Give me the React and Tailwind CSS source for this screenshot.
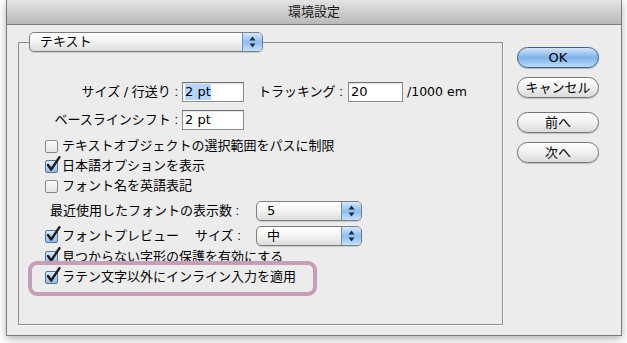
import React from "react";

const FONT = { fontFamily: '"Liberation Sans", "Noto Sans CJK JP", sans-serif' };
const LATIN = { fontFamily: '"DejaVu Sans", "Noto Sans CJK JP", sans-serif' };

function Arrows() {
  return (
    <svg width="7" height="12" viewBox="0 0 7 12">
      <path d="M3.5 0.5 L6.5 4.5 L0.5 4.5 Z" fill="#1b2b44" />
      <path d="M3.5 11.5 L6.5 7.5 L0.5 7.5 Z" fill="#1b2b44" />
    </svg>
  );
}

function Popup({ label, width, latin }) {
  return (
    <div
      className="relative flex h-[20px] items-stretch rounded-[5px] border border-[#7f7f7f] bg-gradient-to-b from-[#ffffff] via-[#f3f3f3] to-[#dcdcdc] shadow-[0_1px_1px_rgba(0,0,0,0.15)]"
      style={{ width }}
    >
      <span className="flex-1 pl-[10px] text-[13px] leading-[18px] text-black" style={latin ? LATIN : undefined}>
        {label}
      </span>
      <span className="flex w-[20px] items-center justify-center rounded-r-[4px] border-l border-[#6d8fbf] bg-gradient-to-b from-[#d6e8fb] via-[#8fbdf0] to-[#c5e0fb]">
        <Arrows />
      </span>
    </div>
  );
}

function Checkbox({ checked }) {
  return (
    <span className="relative inline-block h-[13px] w-[13px] shrink-0">
      <span
        className={
          checked
            ? "absolute inset-0 rounded-[2px] border border-[#5a7396] bg-gradient-to-b from-[#d9ebfc] to-[#8cbbec]"
            : "absolute inset-0 rounded-[2px] border border-[#8a8a8a] bg-gradient-to-b from-[#fdfdfd] to-[#e4e4e4]"
        }
      />
      {checked && (
        <svg className="absolute left-[1px] top-[-4px]" width="15" height="16" viewBox="0 0 15 16">
          <path d="M2 9 L5.2 13.5 L13.5 1.2" fill="none" stroke="#1d1d1d" strokeWidth="2.4" strokeLinecap="round" strokeLinejoin="round" />
        </svg>
      )}
    </span>
  );
}

function CheckRow({ checked, children, className = "" }) {
  return (
    <div className={`flex h-[20px] items-center pl-[26px] ${className}`}>
      <Checkbox checked={checked} />
      <span className="ml-[4px] text-[13px] leading-[20px] text-black">{children}</span>
    </div>
  );
}

function Field({ value, width, selected }) {
  return (
    <div
      className="flex h-[20px] items-center border border-[#8c8c8c] border-t-[#6f6f6f] bg-white pl-[2px] shadow-[inset_0_1px_1px_rgba(0,0,0,0.12)]"
      style={{ width }}
    >
      <span className={`text-[13px] leading-[16px] text-black ${selected ? "bg-[#b5d5ff]" : ""}`} style={LATIN}>
        {value}
      </span>
    </div>
  );
}

function Button({ children, primary }) {
  return (
    <button
      className={
        primary
          ? "flex h-[21px] w-[82px] items-center justify-center rounded-full border border-[#3f5f92] bg-gradient-to-b from-[#d3e6fa] via-[#7fb2ea] to-[#b9dcfb] text-[13px] leading-[18px] text-black shadow-[0_1px_1px_rgba(0,0,0,0.25)]"
          : "flex h-[21px] w-[82px] items-center justify-center rounded-full border border-[#767676] bg-gradient-to-b from-[#ffffff] via-[#f0f0f0] to-[#dadada] text-[13px] leading-[18px] text-black shadow-[0_1px_1px_rgba(0,0,0,0.2)]"
      }
    >
      {children}
    </button>
  );
}

export default function App() {
  return (
    <div className="h-[343px] w-[627px] overflow-hidden bg-white" style={FONT}>
      <div className="ml-[6px] flex h-[336px] w-[616px] flex-col border border-t-0 border-[#7a7a7a] bg-[#ececec] shadow-[0_3px_8px_rgba(0,0,0,0.3)]">
        {/* title bar */}
        <div className="flex h-[25px] shrink-0 items-center justify-center border-b border-[#7b7b7b] bg-gradient-to-b from-[#e4e4e4] to-[#b9b9b9]">
          <span className="text-[13px] leading-[16px] text-[#1a1a1a]">環境設定</span>
        </div>

        <div className="flex pl-[11px] pt-[17px]">
          {/* group box */}
          <div className="relative flex h-[283px] w-[485px] flex-col border border-[#8e8e8e] shadow-[1px_1px_0_#ffffff]">
            <div className="-mt-[11px] ml-[10px]">
              <Popup label="テキスト" width={234} />
            </div>

            <div className="mt-[30px] flex h-[20px] items-center text-[13px] leading-[20px] text-black">
              <span className="w-[159px] text-right">
                サイズ <span style={LATIN}>/</span> 行送り :
              </span>
              <span className="ml-[4px]">
                <Field value="2 pt" width={62} selected />
              </span>
              <span className="ml-[14px] w-[90px]">トラッキング :</span>
              <Field value="20" width={55} />
              <span className="ml-[4px] text-[12.5px]" style={LATIN}>
                /1000 em
              </span>
            </div>

            <div className="mt-[8px] flex h-[20px] items-center text-[13px] leading-[20px] text-black">
              <span className="w-[159px] text-right">ベースラインシフト :</span>
              <span className="ml-[4px]">
                <Field value="2 pt" width={62} />
              </span>
            </div>

            <CheckRow className="mt-[6px]">テキストオブジェクトの選択範囲をパスに制限</CheckRow>
            <CheckRow checked>日本語オプションを表示</CheckRow>
            <CheckRow>フォント名を英語表記</CheckRow>

            <div className="mt-[5px] flex h-[20px] items-center pl-[31px] text-[13px] leading-[20px] text-black">
              <span className="w-[206px]">最近使用したフォントの表示数 :</span>
              <Popup label="5" width={106} latin />
            </div>

            <div className="mt-[5px] flex h-[20px] items-center pl-[26px] text-[13px] leading-[20px] text-black">
              <Checkbox checked />
              <span className="ml-[4px] w-[133px]">フォントプレビュー</span>
              <span className="w-[61px]">サイズ :</span>
              <Popup label="中" width={106} />
            </div>

            <CheckRow checked className="mt-[1px]">見つからない字形の保護を有効にする</CheckRow>
            <CheckRow checked>ラテン文字以外にインライン入力を適用</CheckRow>

            {/* highlight annotation */}
            <div className="pointer-events-none absolute left-[9px] top-[218px] h-[35px] w-[289px] rounded-[9px] border-[4px] border-[#c79db7]" />
          </div>

          {/* buttons */}
          <div className="ml-[14px] mt-[5px] flex flex-col">
            <Button primary>
              <span style={LATIN}>OK</span>
            </Button>
            <div className="mt-[9px]">
              <Button>キャンセル</Button>
            </div>
            <div className="mt-[14px]">
              <Button>前へ</Button>
            </div>
            <div className="mt-[9px]">
              <Button>次へ</Button>
            </div>
          </div>
        </div>
      </div>
    </div>
  );
}
